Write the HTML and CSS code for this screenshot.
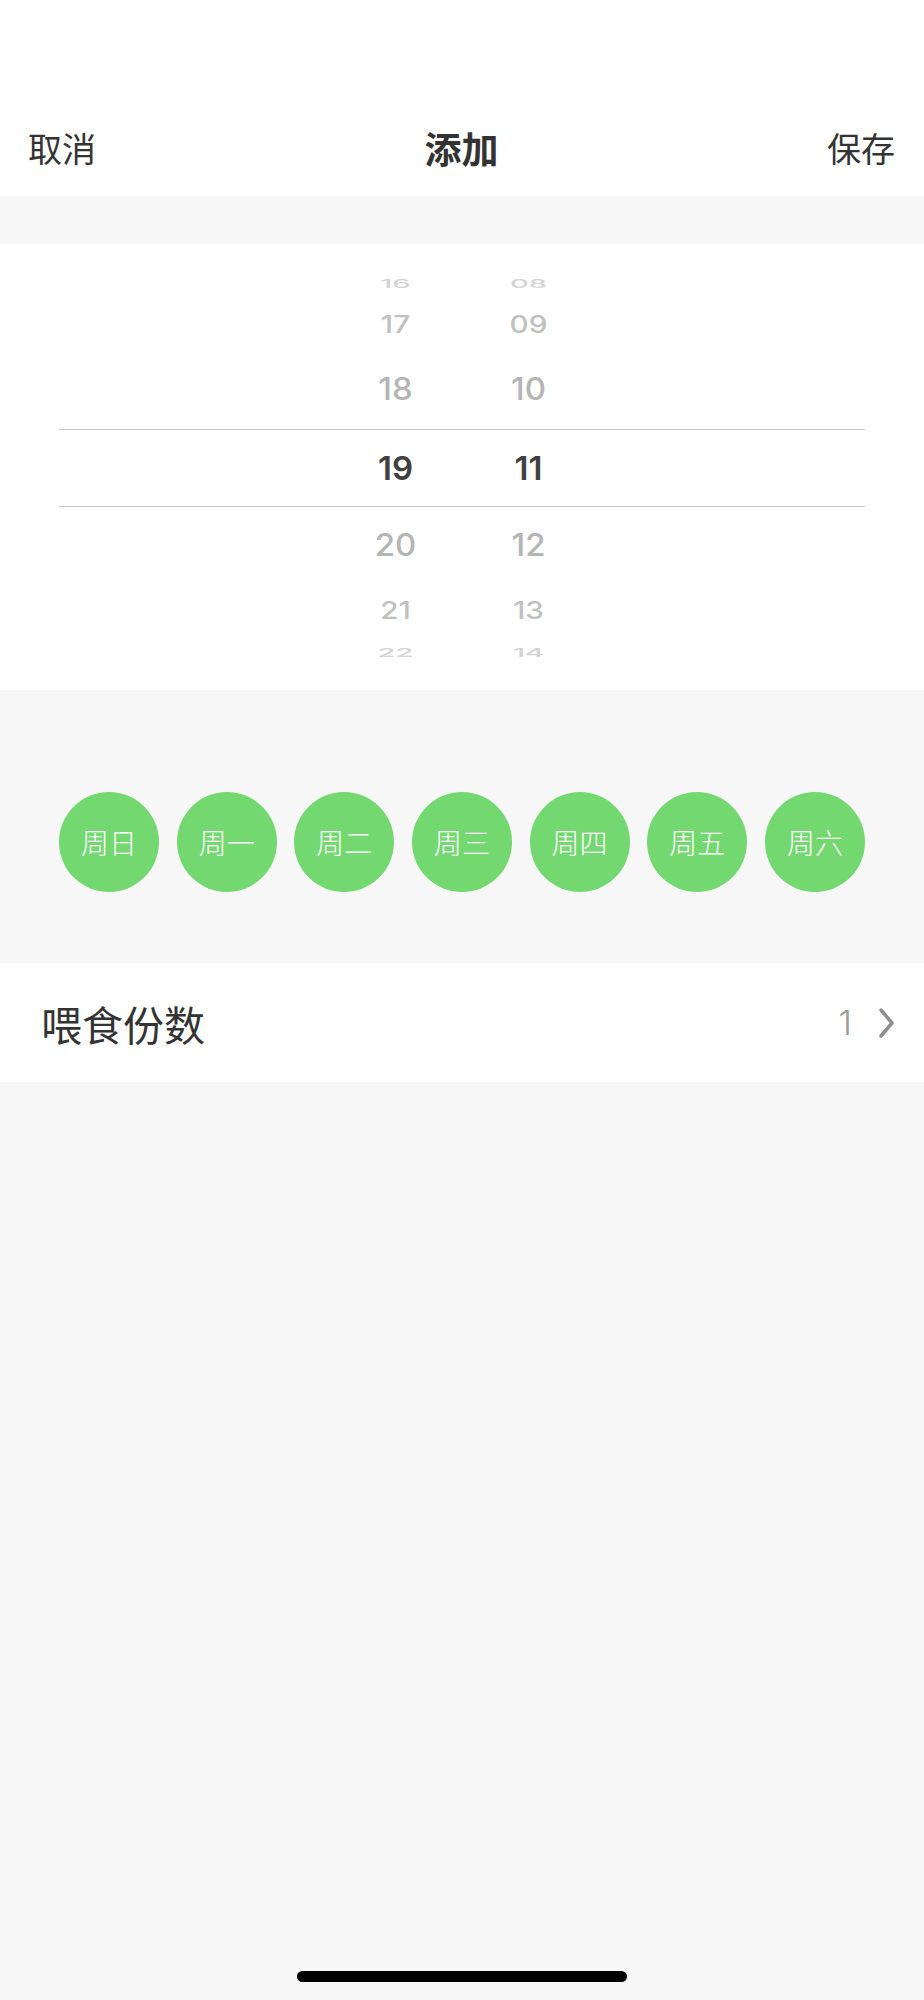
FILE: index.html
```html
<!DOCTYPE html>
<html lang="zh-CN">
<head>
    <meta charset="UTF-8">
    <meta name="viewport" content="width=device-width, initial-scale=1.0">
    <title>添加</title>
    <link rel="stylesheet" href="styles.css">
</head>
<body>
    <div class="page">
        <div class="nav">
            <span class="nav-btn">取消</span>
            <span class="nav-title">添加</span>
            <span class="nav-btn">保存</span>
        </div>

        <div class="gap"></div>

        <div class="picker">
            <div class="wheel-row r16"><span class="cell">16</span><span class="cell">08</span></div>
            <div class="wheel-row r17"><span class="cell">17</span><span class="cell">09</span></div>
            <div class="wheel-row r18"><span class="cell">18</span><span class="cell">10</span></div>
            <div class="wheel-row selected"><span class="cell">19</span><span class="cell">11</span></div>
            <div class="wheel-row r20"><span class="cell">20</span><span class="cell">12</span></div>
            <div class="wheel-row r21"><span class="cell">21</span><span class="cell">13</span></div>
            <div class="wheel-row r22"><span class="cell">22</span><span class="cell">14</span></div>
        </div>

        <div class="days">
            <span class="day">周日</span>
            <span class="day">周一</span>
            <span class="day">周二</span>
            <span class="day">周三</span>
            <span class="day">周四</span>
            <span class="day">周五</span>
            <span class="day">周六</span>
        </div>

        <div class="list-row">
            <span class="list-label">喂食份数</span>
            <span class="list-value">
                1
                <svg class="chevron" width="18" height="30" viewBox="0 0 18 30">
                    <path d="M3 2 L14 15 L3 28" fill="none" stroke="#8e8e8e" stroke-width="3.5" stroke-linecap="round" stroke-linejoin="round"/>
                </svg>
            </span>
        </div>

        <div class="spacer"></div>
        <div class="home-bar"></div>
    </div>
</body>
</html>
```

FILE: styles.css
```css
* {
    margin: 0;
    padding: 0;
    box-sizing: border-box;
}

body {
    background: #f7f7f7;
    font-family: "Noto Sans CJK SC", "Noto Sans", sans-serif;
    color: #333;
}

.page {
    min-height: 2000px;
    display: flex;
    flex-direction: column;
}

/* top bar */
.nav {
    height: 196px;
    padding: 100px 29px 0 28px;
    background: #fff;
    display: flex;
    align-items: center;
    justify-content: space-between;
}

.nav-btn {
    font-size: 34px;
    line-height: 48px;
    color: #333;
}

.nav-title {
    font-size: 37px;
    line-height: 48px;
    font-weight: bold;
    color: #333;
}

.gap {
    height: 48px;
}

/* time wheel */
.picker {
    height: 446px;
    padding-top: 24px;
    background: #fff;
    font-family: Inter, "Liberation Sans", sans-serif;
}

.wheel-row {
    display: flex;
    justify-content: center;
    align-items: center;
}

.cell {
    width: 133px;
    text-align: center;
    font-size: 33px;
    font-weight: 500;
    line-height: 1;
    color: #b5b5b5;
}

.r16, .r22 { height: 30px; }
.r17 { height: 52px; }
.r18 { height: 79px; }
.r20 { height: 76px; }
.r21 { height: 54px; }

.r16 .cell, .r22 .cell {
    color: #d3d3d3;
    transform: scale(0.88, 0.37);
}

.r17 .cell, .r21 .cell {
    color: #c0c0c0;
    transform: scale(0.9, 0.73);
}

.r18 .cell, .r20 .cell {
    transform: scale(1, 0.94);
}

.selected {
    height: 78px;
    margin: 0 59px;
    border-top: 1px solid #c9c9c9;
    border-bottom: 1px solid #c9c9c9;
}

.selected .cell {
    color: #404040;
    font-weight: 600;
}

/* weekdays */
.days {
    height: 273px;
    padding: 102px 59px 0;
    display: flex;
    justify-content: space-between;
    align-items: flex-start;
}

.day {
    width: 100px;
    height: 100px;
    border-radius: 50%;
    background: #72d86f;
    color: #fff;
    font-size: 28px;
    font-weight: 300;
    display: flex;
    align-items: center;
    justify-content: center;
}

/* portions row */
.list-row {
    height: 119px;
    padding: 0 28px 0 41px;
    background: #fff;
    display: flex;
    align-items: center;
    justify-content: space-between;
}

.list-label {
    font-size: 41px;
    color: #333;
}

.list-value {
    display: flex;
    align-items: center;
    gap: 26px;
    font-family: Inter, "Liberation Sans", sans-serif;
    font-size: 34px;
    font-weight: 300;
    color: #999;
}

.spacer {
    flex: 1;
}

.home-bar {
    width: 330px;
    height: 11px;
    margin: 0 auto 18px;
    border-radius: 6px;
    background: #000;
}
```
